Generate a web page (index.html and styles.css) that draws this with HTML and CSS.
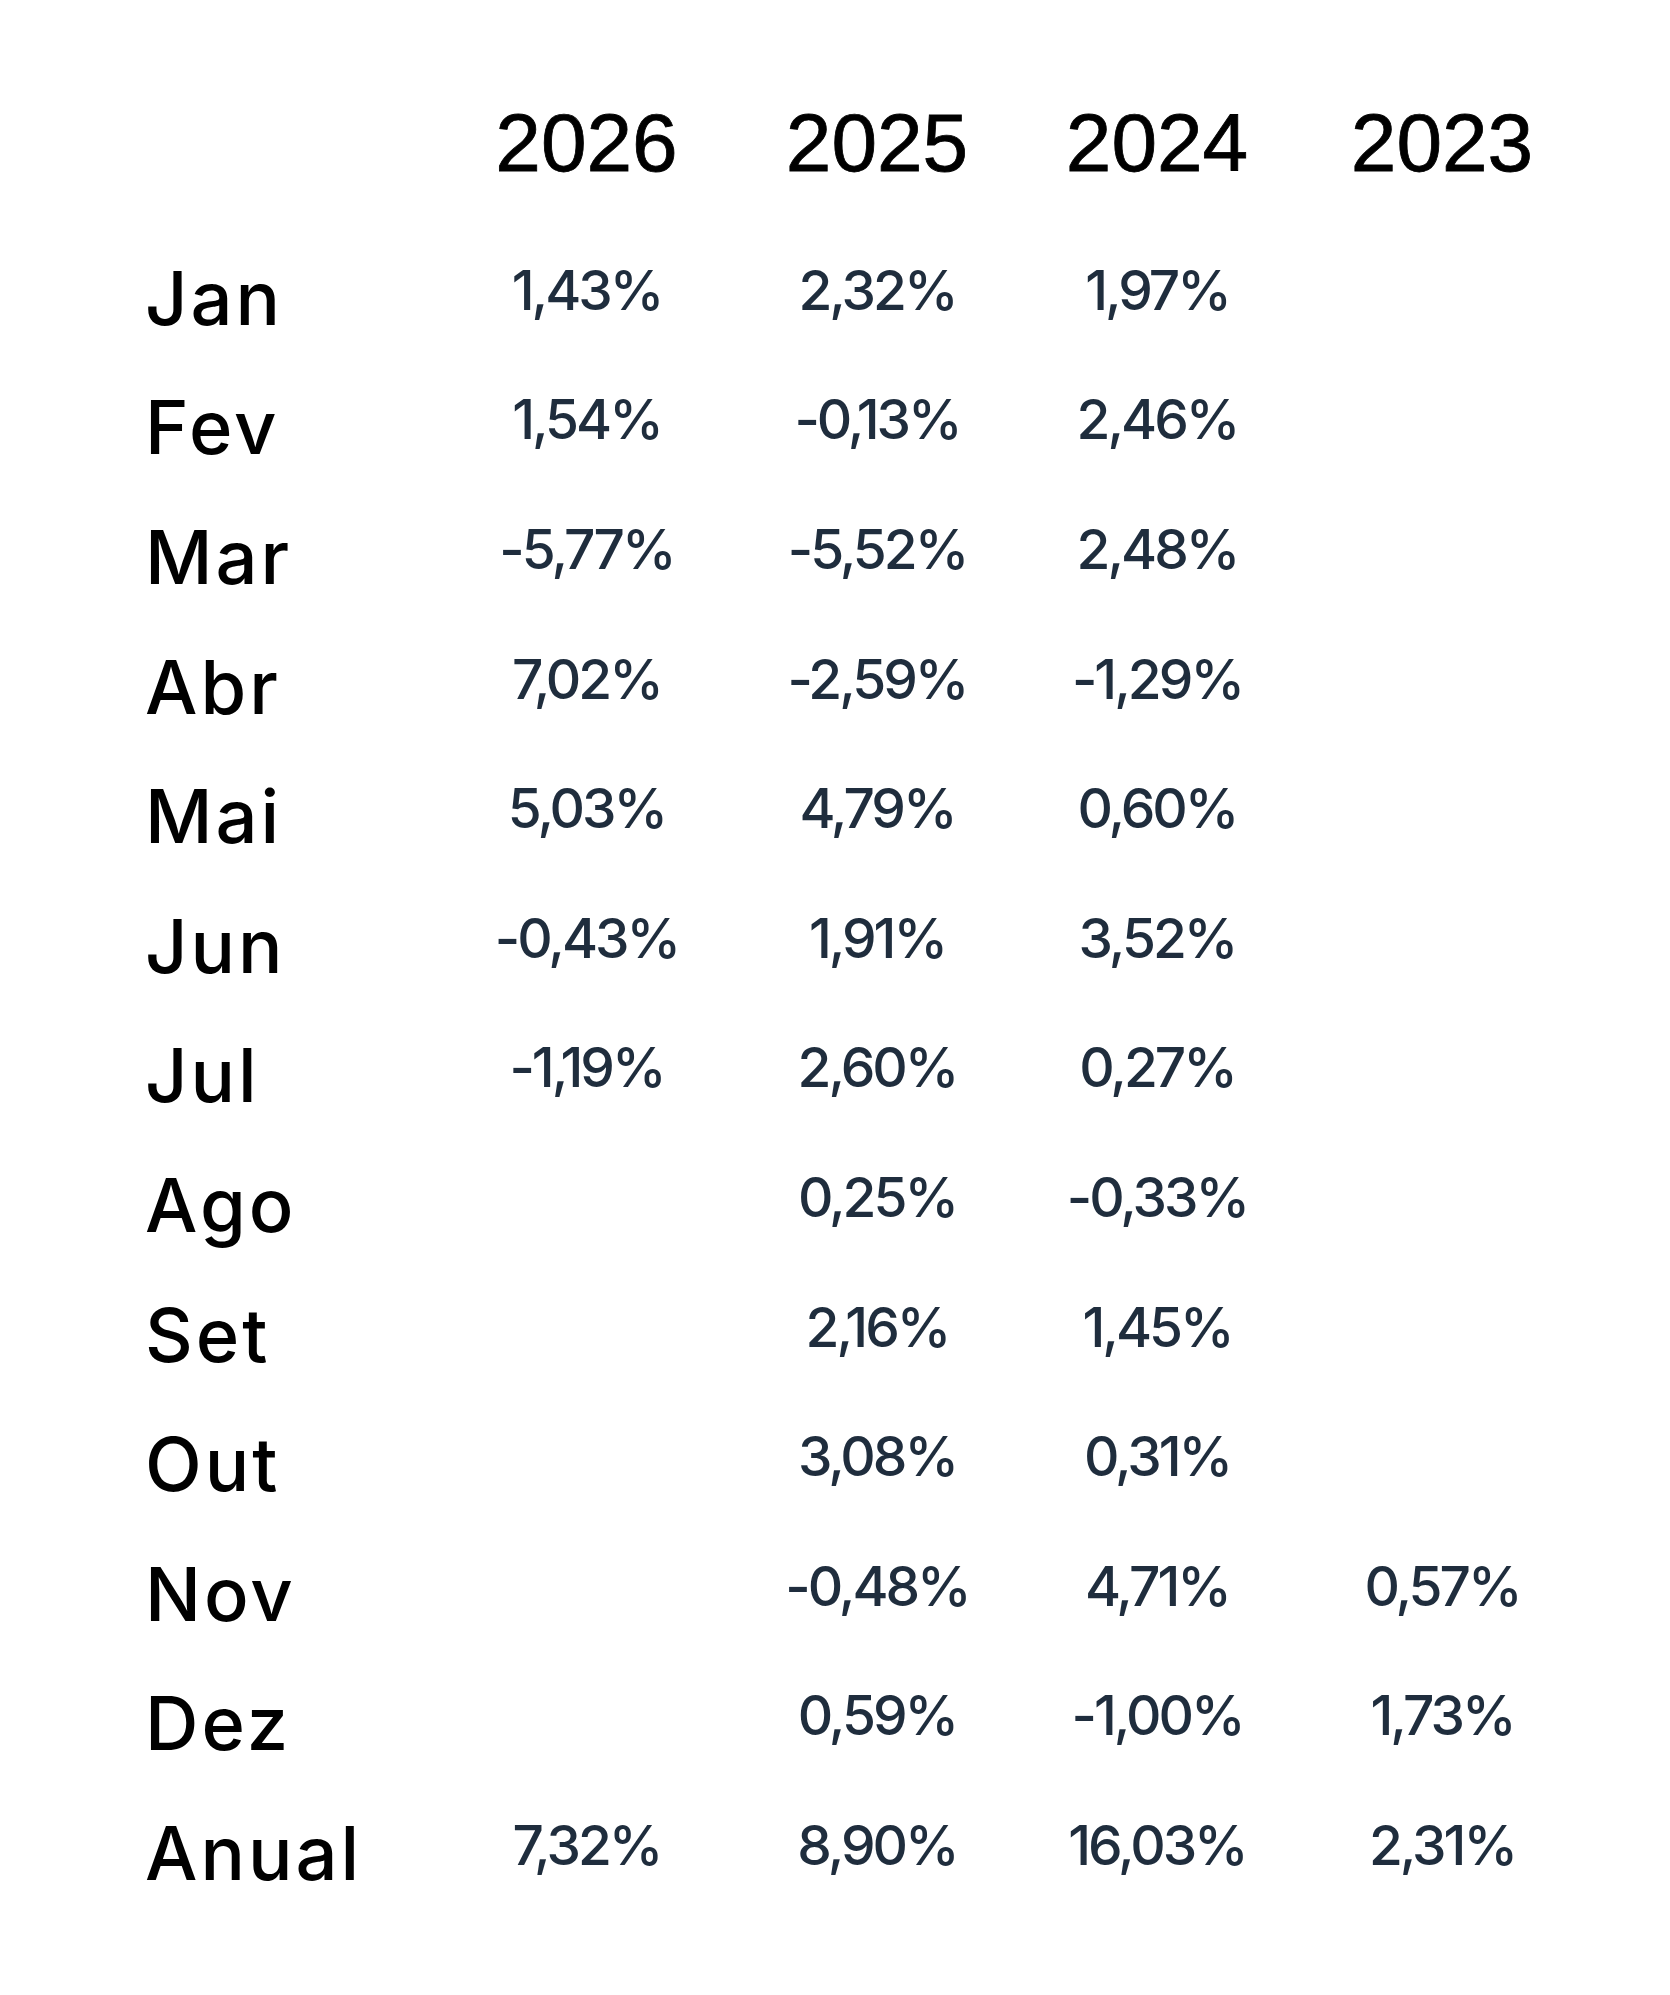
FILE: index.html
```html
<!DOCTYPE html>
<html lang="pt">
<head>
<meta charset="utf-8">
<title>Rentabilidade mensal</title>
<link rel="stylesheet" href="styles.css">
</head>
<body>
<div class="table">
  <div class="corner"></div>
  <div class="year">2026</div>
  <div class="year">2025</div>
  <div class="year">2024</div>
  <div class="year">2023</div>

  <div class="month">Jan</div><div class="val">1,43%</div><div class="val">2,32%</div><div class="val">1,97%</div><div class="val"></div>
  <div class="month">Fev</div><div class="val">1,54%</div><div class="val">-0,13%</div><div class="val">2,46%</div><div class="val"></div>
  <div class="month">Mar</div><div class="val">-5,77%</div><div class="val">-5,52%</div><div class="val">2,48%</div><div class="val"></div>
  <div class="month">Abr</div><div class="val">7,02%</div><div class="val">-2,59%</div><div class="val">-1,29%</div><div class="val"></div>
  <div class="month">Mai</div><div class="val">5,03%</div><div class="val">4,79%</div><div class="val">0,60%</div><div class="val"></div>
  <div class="month">Jun</div><div class="val">-0,43%</div><div class="val">1,91%</div><div class="val">3,52%</div><div class="val"></div>
  <div class="month">Jul</div><div class="val">-1,19%</div><div class="val">2,60%</div><div class="val">0,27%</div><div class="val"></div>
  <div class="month">Ago</div><div class="val"></div><div class="val">0,25%</div><div class="val">-0,33%</div><div class="val"></div>
  <div class="month">Set</div><div class="val"></div><div class="val">2,16%</div><div class="val">1,45%</div><div class="val"></div>
  <div class="month">Out</div><div class="val"></div><div class="val">3,08%</div><div class="val">0,31%</div><div class="val"></div>
  <div class="month">Nov</div><div class="val"></div><div class="val">-0,48%</div><div class="val">4,71%</div><div class="val">0,57%</div>
  <div class="month">Dez</div><div class="val"></div><div class="val">0,59%</div><div class="val">-1,00%</div><div class="val">1,73%</div>
  <div class="month">Anual</div><div class="val">7,32%</div><div class="val">8,90%</div><div class="val">16,03%</div><div class="val">2,31%</div>
</div>
</body>
</html>
```

FILE: styles.css
```css
html, body {
  margin: 0;
  padding: 0;
  background: #ffffff;
}

.table {
  display: grid;
  grid-template-columns: 290px 303px 278px 282px 288px;
  grid-template-rows: 160.8px repeat(13, 129.6px);
  padding: 102px 0 0 145px;
  align-items: start;
}

.year {
  font-family: "Liberation Sans", Arial, sans-serif;
  font-size: 82px;
  line-height: 1;
  font-weight: 400;
  color: #000000;
  text-align: center;
  -webkit-text-stroke: 0.8px #000000;
}

.month {
  font-family: Inter, "Noto Sans", sans-serif;
  font-size: 74px;
  line-height: 1;
  font-weight: 500;
  color: #000000;
  letter-spacing: 3px;
  margin-top: -2px;
}

.val {
  font-family: Inter, "Noto Sans", sans-serif;
  font-size: 55px;
  line-height: 1;
  font-weight: 500;
  color: #1f2d3d;
  text-align: center;
  letter-spacing: -3px;
}
```
